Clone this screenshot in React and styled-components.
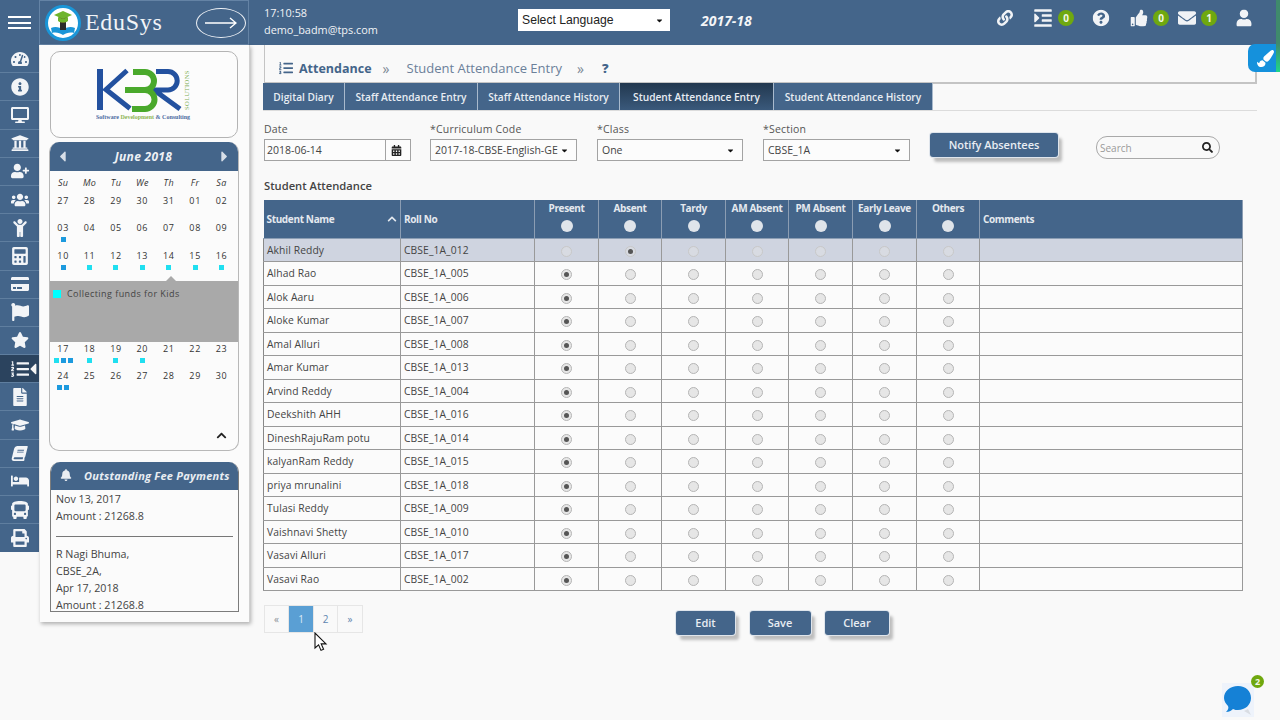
import React from "react";
import styled, { createGlobalStyle } from "styled-components";
import {
  FaTachometerAlt, FaInfoCircle, FaDesktop, FaUniversity, FaUserPlus, FaUsers, FaChild, FaCalculator,
  FaCreditCard, FaFlag, FaStar, FaListOl, FaFileAlt, FaGraduationCap, FaBook, FaBed, FaBus, FaPrint,
  FaLink, FaIndent, FaQuestionCircle, FaThumbsUp, FaEnvelope, FaUser, FaBell, FaCalendarAlt, FaSearch,
  FaPaintBrush, FaChevronUp, FaCaretLeft, FaCaretRight, FaCaretDown,
} from "react-icons/fa";

const NAVY = "#44658a";
const UI = `"Open Sans", "Liberation Sans", sans-serif`;

const Global = createGlobalStyle`
  html, body { margin: 0; padding: 0; background: #f9f9f9; }
  body { font-family: ${UI}; color: #444; }
  * { box-sizing: border-box; }
`;

const Page = styled.div`
  position: relative; width: 1280px; height: 720px; overflow: hidden; background: #f9f9f9;
`;

/* ---------- top bar ---------- */
const TopBar = styled.header`
  display: flex; align-items: stretch; height: 45px; background: ${NAVY}; color: #fff;
`;
const Burger = styled.div`
  width: 39px; display: flex; flex-direction: column; justify-content: center; align-items: center; gap: 3.5px;
  span { display: block; width: 23px; height: 2px; background: #fff; }
`;
const Brand = styled.div`
  width: 210px; display: flex; align-items: center; padding-left: 5px;
  border: 1px solid #6483a5;
`;
const BrandName = styled.span`
  font-family: "Liberation Serif", "DejaVu Serif", serif; font-size: 24px; letter-spacing: 0.7px;
  margin-left: 4px; color: #f2f4f7; width: 112px;
`;
const ArrowOval = styled.div`
  width: 50px; height: 30px; border: 1px solid #eef1f5; border-radius: 50%;
  display: flex; align-items: center; justify-content: center; margin-left: -1px;
`;
const Who = styled.div`
  width: 269px; padding: 4px 0 0 15px; font-size: 10.9px; line-height: 17px; color: #f2f4f7;
`;
const LangSelect = styled.div`
  width: 152px; height: 22px; margin-top: 9px; background: #fff; color: #222; padding: 0 3px 0 4px;
  font-family: "Liberation Sans", sans-serif; font-size: 12.2px;
  display: flex; align-items: center; justify-content: space-between;
`;
const Year = styled.div`
  margin: 12px 0 0 31px; width: 259px; font-size: 14px; font-weight: 700; font-style: italic; color: #f4f6f8; line-height: 18px;
`;
const TopIcons = styled.div`
  position: relative; flex: 1;
`;
const TopIcon = styled.div`
  position: absolute; top: 18px; left: ${p => p.$x}px; transform: translate(-50%, -50%);
  display: flex; color: #f1f3f6; font-size: ${p => p.$s || 17}px;
`;
const Badge = styled.div`
  position: absolute; width: 16px; height: 16px; border-radius: 50%; background: #6fa80f; color: #f2f7e6;
  font-size: 10px; font-weight: 700; line-height: 16px; text-align: center;
  left: ${p => p.$x}px; top: ${p => p.$y}px;
`;

/* ---------- body ---------- */
const Body = styled.div`
  display: flex; align-items: flex-start;
`;
const Rail = styled.nav`
  width: 39px; background: ${NAVY}; display: flex; flex-direction: column;
`;
const RailItem = styled.div`
  position: relative; height: 28.2px; display: flex; align-items: center; justify-content: center;
  color: #f2f4f7; font-size: 18px; border-bottom: 1px solid #5f7e9f;
  background: ${p => (p.$active ? "#2b435e" : "transparent")};
  &:last-child { border-bottom: 0; }
`;
const RailCaret = styled.span`
  position: absolute; right: -3px; top: 5px; display: flex; color: #f4f4f4; font-size: 18px;
`;
const SlantBook = styled(FaBook)`
  font-size: 15px; transform: skewX(-14deg);
`;
const Side = styled.aside`
  width: 210px; height: 577px; padding: 6px 9px 0 9px; background: #fbfbfb; border-right: 1px solid #d0d0d0;
  box-shadow: 1px 2px 4px rgba(0,0,0,.3); margin-left: 1px;
`;
const LogoCard = styled.div`
  width: 188px; height: 87px; border: 1px solid #b4b4b4; border-radius: 10px; background: #fcfcfc;
  display: flex; align-items: center; justify-content: center;
  margin-left: 1px; padding: 3px 0 0 3px;
`;
const Cal = styled.section`
  width: 190px; height: 309px; margin-top: 4px; border: 1px solid #b8b8b8; border-top: 0; border-radius: 10px; background: #fbfbfb; overflow: hidden;
`;
const CalHead = styled.div`
  height: 29px; background: ${NAVY}; color: #eef1f5; display: flex; align-items: center; justify-content: space-between;
  padding: 0 5px 0 4px; font-size: 12px; font-weight: 700; font-style: italic; letter-spacing: .3px;
  svg { font-size: 17px; color: #d8dfe8; }
`;
const CalGrid = styled.div`
  display: grid; grid-template-columns: repeat(7, 26.4px); margin: ${p => p.$m || 0};
`;
const WeekCell = styled.div`
  text-align: center; font-size: 9px; font-style: italic; color: #333; letter-spacing: .4px; line-height: 12px; padding-top: 6px; height: 21px;
`;
const DayCell = styled.div`
  height: 27.3px; text-align: center; font-size: 9px; letter-spacing: .7px; color: #333; line-height: 12px; padding-top: 3px;
`;
const Dots = styled.div`
  display: flex; justify-content: center; gap: 2px; margin-top: 3px;
`;
const Dot = styled.i`
  display: block; width: 5px; height: 5px; background: ${p => (p.$blue ? "#1c9ade" : "#20dff0")};
`;
const EventPanel = styled.div`
  position: relative; height: 61px; background: #a9a9a9; display: flex; align-items: flex-start; padding: 9px 0 0 3px;
  font-size: 9px; letter-spacing: .45px; color: #444;
  &::before { content: ""; position: absolute; left: 116px; top: -5px; border: 5px solid transparent; border-top: 0; border-bottom-color: #a9a9a9; }
`;
const EventSwatch = styled.i`
  width: 8px; height: 8px; background: #0ff; margin-right: 6px; flex: none;
`;
const EventText = styled.span` line-height: 10px; margin-top: -1px; `;
const CalFoot = styled.div`
  display: flex; justify-content: flex-end; padding: 36px 11px 0 0; font-size: 11px; color: #222;
`;
const FeeCard = styled.section`
  width: 189px; height: 150px; margin: 11px 0 0 1px; border: 1px solid #7c7c7c; border-top: 0; border-radius: 10px 10px 0 0; overflow: hidden; background: #fbfbfb;
`;
const FeeHead = styled.div`
  height: 28px; background: ${NAVY}; color: #e9edf2; display: flex; align-items: center; padding: 0 0 2px 9px;
  font-size: 11px; font-weight: 700; font-style: italic; letter-spacing: .25px; white-space: nowrap;
  svg { font-size: 12px; margin-right: 12px; flex: none; }
`;
const FeeBody = styled.div`
  padding: 1px 5px 0; font-size: 10.7px; line-height: 17px; color: #444;
  p { margin: 0; }
`;
const FeeRule = styled.hr`
  margin: 11px 0 9px; border: 0; border-top: 1px solid #777;
`;

/* ---------- main ---------- */
const Main = styled.main`
  width: 993px; margin-left: 14px; position: relative;
`;
const Crumb = styled.div`
  height: 39px; border: 1px solid #c4c4c4; border-width: 0 2px 2px 1px; display: flex; align-items: center;
  padding: 9px 0 0 14px; color: #6b8099; font-size: 13px;
`;
const CrumbStrong = styled.span`
  color: ${NAVY}; font-weight: 700; font-size: 12.5px; margin-left: 6px;
`;
const CrumbSep = styled.span`
  color: #7b8794; font-size: 14px; margin: 0 ${p => p.$r}px 0 ${p => p.$l}px;
`;
const Help = styled.span`
  color: ${NAVY}; font-weight: 800; font-size: 13px;
`;
const Tabs = styled.div`
  display: flex; margin: -1px 0 0 -1px; height: 28px; border-bottom: 1px solid #dcdcdc;
`;
const Tab = styled.div`
  width: ${p => p.$w}px; height: 27px; display: flex; align-items: center; justify-content: center; font-size: 10.2px; font-weight: 600; white-space: nowrap;
  color: #e8edf3; border-right: 1px solid #a9bacd;
  background: ${p => (p.$active ? "linear-gradient(#22384f,#3a597b)" : NAVY)};
`;
const FormRow = styled.div`
  display: flex; align-items: flex-start; margin-top: 11px; height: 42px;
`;
const Field = styled.div`
  width: ${p => p.$w}px; margin-right: ${p => p.$gap}px; font-size: 10.5px; color: #555;
`;
const FieldLabel = styled.div` height: 17px; line-height: 14px; letter-spacing: .2px; `;
const InputBox = styled.div`
  height: 22px; border: 1px solid #a3a3a3; background: #fcfcfc; display: flex; align-items: center; justify-content: space-between;
  padding: 0 4px 0 ${p => (p.$tight ? 2 : 4)}px; color: #444; font-size: 10.5px;
`;
const CalBtn = styled.div`
  width: 25px; height: 20px; margin-right: -4px; border-left: 1px solid #a3a3a3; display: flex; align-items: center; justify-content: center; color: #222; font-size: 11px; padding-right: 3px;
`;
const Caret = styled.span` display: flex; font-size: 9px; color: #111; margin-right: 3px; `;
const RaisedBtn = styled.button`
  height: 24px; padding: 0 0 2px; width: ${p => p.$w}px; border: 0; border-radius: 3px; background: ${NAVY}; color: #e8edf3;
  margin-top: ${p => p.$top || 0}px;
  font-family: ${UI}; font-size: 11px; font-weight: 600;
  box-shadow: 0 0 0 1px #dfe5ec, 4px 5px 3px #bdbdbd;
`;
const SearchBox = styled.div`
  width: 124px; height: 23px; margin: 14px 0 0 38px; border: 1px solid #a9a9a9; border-radius: 11px; display: flex; align-items: center; justify-content: space-between;
  padding: 0 6px 0 3px; font-size: 10px; color: #9a9a9a;
  svg { color: #222; font-size: 11px; }
`;
const SectionTitle = styled.div`
  margin-top: 12px; height: 20px; font-size: 11.2px; font-weight: 600; color: #444; line-height: 20px;
`;
const Grid = styled.table`
  width: 979px; border-collapse: collapse; table-layout: fixed; margin: 4px 0 0 -1px; border-bottom: 1px solid #888;
`;
const Th = styled.th`
  height: 38px; padding: 0 ${p => (p.$left ? "3px" : "0")}; background: ${NAVY}; color: #e4e9ef; font-size: 10px; font-weight: 700; letter-spacing: -.35px;
  border-right: 1px solid #8b9db3; border-bottom: 1px solid #8b9db3; text-align: ${p => (p.$left ? "left" : "center")}; vertical-align: middle; white-space: nowrap;
`;
const ThInner = styled.div`
  display: flex; flex-direction: column; align-items: center; gap: 5px; line-height: 13px; padding-bottom: 4px;
`;
const NameHead = styled.div`
  display: flex; align-items: center; justify-content: space-between;
  svg { font-size: 10px; }
`;
const HeadRadio = styled.i`
  display: block; width: 12px; height: 12px; border-radius: 50%; background: #dfe4ea;
`;
const Tr = styled.tr`
  background: ${p => (p.$sel ? "#cfd4e0" : "#fbfbfb")};
`;
const Td = styled.td`
  height: 23.53px; padding: 0 3px; font-size: 10.3px; color: #444; border: 1px solid #999; border-top: 0; letter-spacing: .1px; white-space: nowrap;
  text-align: ${p => (p.$c ? "center" : "left")};
  &:first-child { border-left: 1px solid #888; }
`;
const Radio = styled.span`
  display: inline-block; vertical-align: middle; width: 11px; height: 11px; border-radius: 50%; position: relative;
  border: 1px solid ${p => (p.$faint ? "#c8c8c8" : "#b5b5b5")}; background: ${p => (p.$faint ? "#d8dbe2" : "#e6e6e6")};
  &::after { content: ""; position: absolute; display: ${p => (p.$on ? "block" : "none")}; left: 2px; top: 2px; width: 5px; height: 5px; border-radius: 50%; background: #555; }
`;
const Footer = styled.div`
  display: flex; align-items: flex-start; margin-top: 14px;
`;
const Pager = styled.div`
  display: flex; height: 28px; width: 412px;
`;
const PageCell = styled.div`
  width: ${p => p.$w}px; height: 28px; display: flex; align-items: center; justify-content: center; font-size: 10px;
  border: 1px solid #e6e6e6; margin-right: -1px;
  color: ${p => (p.$active ? "#dfeaf5" : p.$dim ? "#8a8f96" : "#5f86b0")};
  background: ${p => (p.$active ? "#5a9fd4" : "transparent")};
`;
const Actions = styled.div`
  display: flex; gap: 14.5px; margin-top: 6px;
`;

/* ---------- overlays ---------- */
const GreenEdge = styled.div`
  position: absolute; right: 0; top: 0; width: 4px; height: 72px; background: linear-gradient(#3f8a6c 60%, #1fd68a);
`;
const BrushTab = styled.div`
  position: absolute; left: 1248px; top: 44px; width: 28px; height: 28px; background: #1591dc; border-radius: 7px 0 0 7px;
  display: flex; align-items: center; justify-content: center; color: #fff; font-size: 17px; padding-left: 6px;
`;
const Chat = styled.div` position: absolute; left: 1222px; top: 683px; width: 32px; height: 34px; background: #eef3fb; `;
const ChatBadge = styled(Badge)` left: 1251px; top: 675px; width: 13px; height: 13px; line-height: 13px; font-size: 9px; `;
const Cursor = styled.svg` position: absolute; left: 314px; top: 632px; `;

const railIcons = [FaTachometerAlt, FaInfoCircle, FaDesktop, FaUniversity, FaUserPlus, FaUsers, FaChild, FaCalculator, FaCreditCard, FaFlag, FaStar, FaListOl, FaFileAlt, FaGraduationCap, SlantBook, FaBed, FaBus, FaPrint];
const week = ["Su", "Mo", "Tu", "We", "Th", "Fr", "Sa"];
const C = "c", B = "b";
const calRows = [
  [["27"], ["28"], ["29"], ["30"], ["31"], ["01"], ["02"]],
  [["03", [B]], ["04"], ["05"], ["06"], ["07"], ["08"], ["09"]],
  [["10", [B]], ["11", [C]], ["12", [C]], ["13", [C]], ["14", [C]], ["15", [C]], ["16", [C]]],
];
const calRows2 = [
  [["17", [C, B, B]], ["18", [C]], ["19", [C]], ["20", [C]], ["21"], ["22"], ["23"]],
  [["24", [B, B]], ["25"], ["26"], ["27"], ["28"], ["29"], ["30"]],
];
const students = [
  ["Akhil Reddy", "CBSE_1A_012"], ["Alhad Rao", "CBSE_1A_005"], ["Alok Aaru", "CBSE_1A_006"], ["Aloke Kumar", "CBSE_1A_007"],
  ["Amal Alluri", "CBSE_1A_008"], ["Amar Kumar", "CBSE_1A_013"], ["Arvind Reddy", "CBSE_1A_004"], ["Deekshith AHH", "CBSE_1A_016"],
  ["DineshRajuRam potu", "CBSE_1A_014"], ["kalyanRam Reddy", "CBSE_1A_015"], ["priya mrunalini", "CBSE_1A_018"], ["Tulasi Reddy", "CBSE_1A_009"],
  ["Vaishnavi Shetty", "CBSE_1A_010"], ["Vasavi Alluri", "CBSE_1A_017"], ["Vasavi Rao", "CBSE_1A_002"],
];
const statuses = ["Present", "Absent", "Tardy", "AM Absent", "PM Absent", "Early Leave", "Others"];
const widths = [137, 134, 64, 63, 64, 63, 64, 64, 63, 263];
const tabs = [["Digital Diary", 82], ["Staff Attendance Entry", 133], ["Staff Attendance History", 142], ["Student Attendance Entry", 154], ["Student Attendance History", 159]];

const EduLogo = () => (
  <svg width="36" height="36" viewBox="0 0 36 36">
    <circle cx="18" cy="18" r="16.5" fill="#fff" stroke="#1a96d8" strokeWidth="3" />
    <path d="M6 23c4-2 9-1 12 2 3-3 8-4 12-2l-1 5c-4-1-8 0-11 2-3-2-7-3-11-2z" fill="#1a96d8" />
    <path d="M15 17h6v8h-6z" fill="#2b2b2b" />
    <circle cx="18" cy="14" r="4" fill="#5a3a20" />
    <path d="M9 10l9-4 9 4-9 4z" fill="#6fb52c" />
    <path d="M13 12v4c3 2 7 2 10 0v-4l-5 2z" fill="#6fb52c" />
  </svg>
);

const KbrLogo = () => (
  <svg width="100" height="56" viewBox="0 0 100 56">
    <rect x="1" y="1" width="6" height="41" fill="#23519f" />
    <path d="M31 2.5L10 21.5 34 40.5" fill="none" stroke="#23519f" strokeWidth="5" />
    <path d="M60 3.5H72a9.2 9.2 0 0 1 0 18.4H58L84 41" fill="none" stroke="#23519f" strokeWidth="5" />
    <path d="M37 4H49a9 9 0 0 1 0 18H29M49 22a9.5 9.5 0 0 1 0 19H36" fill="none" stroke="#4aa92c" strokeWidth="6" />
    <text x="0" y="0" transform="translate(93 42) rotate(-90)" fontFamily="Liberation Serif, serif" fontSize="6.6" letterSpacing=".35" fill="#7fae55">SOLUTIONS</text>
    <text x="0" y="50.5" fontFamily="Liberation Serif, serif" fontWeight="700" fontSize="6" fill="#4a6aa0">Software <tspan fill="#8db554">Development</tspan> &amp; Consulting</text>
  </svg>
);

export default function App() {
  return (
    <Page>
      <Global />
      <TopBar>
        <Burger><span /><span /><span /></Burger>
        <Brand>
          <EduLogo />
          <BrandName>EduSys</BrandName>
          <ArrowOval>
            <svg width="32" height="12" viewBox="0 0 32 12"><path d="M0 6H31M25 1l6 5-6 5" fill="none" stroke="#fff" strokeWidth="1.4" /></svg>
          </ArrowOval>
        </Brand>
        <Who>17:10:58<br />demo_badm@tps.com</Who>
        <LangSelect>Select Language <Caret><FaCaretDown /></Caret></LangSelect>
        <Year>2017-18</Year>
        <TopIcons>
          <TopIcon $x={45} $s={16}><FaLink /></TopIcon>
          <TopIcon $x={83} $s={20}><FaIndent /></TopIcon>
          <Badge $x={98} $y={10}>0</Badge>
          <TopIcon $x={141}><FaQuestionCircle /></TopIcon>
          <TopIcon $x={179}><FaThumbsUp /></TopIcon>
          <Badge $x={193} $y={10}>0</Badge>
          <TopIcon $x={227} $s={18}><FaEnvelope /></TopIcon>
          <Badge $x={241} $y={10}>1</Badge>
          <TopIcon $x={284} $s={17}><FaUser /></TopIcon>
        </TopIcons>
      </TopBar>
      <Body>
        <Rail>
          {railIcons.map((I, i) => (
            <RailItem key={i} $active={i === 11}>
              <I />
              {i === 11 && <RailCaret><FaCaretLeft /></RailCaret>}
            </RailItem>
          ))}
        </Rail>
        <Side>
          <LogoCard><KbrLogo /></LogoCard>
          <Cal>
            <CalHead><FaCaretLeft /><span>June 2018</span><FaCaretRight /></CalHead>
            <CalGrid $m="0 0 7px 0">
              {week.map(d => <WeekCell key={d}>{d}</WeekCell>)}
              {calRows.flat().map(([d, dots], i) => (
                <DayCell key={i}>{d}{dots && <Dots>{dots.map((k, j) => <Dot key={j} $blue={k === B} />)}</Dots>}</DayCell>
              ))}
            </CalGrid>
            <EventPanel><EventSwatch /><EventText>Collecting funds for Kids</EventText></EventPanel>
            <CalGrid $m="-2px 0 0 0">
              {calRows2.flat().map(([d, dots], i) => (
                <DayCell key={i}>{d}{dots && <Dots>{dots.map((k, j) => <Dot key={j} $blue={k === B} />)}</Dots>}</DayCell>
              ))}
            </CalGrid>
            <CalFoot><FaChevronUp /></CalFoot>
          </Cal>
          <FeeCard>
            <FeeHead><FaBell />Outstanding Fee Payments</FeeHead>
            <FeeBody>
              <p>Nov 13, 2017</p>
              <p>Amount : 21268.8</p>
              <FeeRule />
              <p>R Nagi Bhuma,</p>
              <p>CBSE_2A,</p>
              <p>Apr 17, 2018</p>
              <p>Amount : 21268.8</p>
            </FeeBody>
          </FeeCard>
        </Side>
        <Main>
          <Crumb>
            <FaListOl color={NAVY} size={14} />
            <CrumbStrong>Attendance</CrumbStrong>
            <CrumbSep $l={11} $r={17}>»</CrumbSep>
            Student Attendance Entry
            <CrumbSep $l={15} $r={18}>»</CrumbSep>
            <Help>?</Help>
          </Crumb>
          <Tabs>
            {tabs.map(([t, w], i) => <Tab key={t} $w={w} $active={i === 3}>{t}</Tab>)}
          </Tabs>
          <FormRow>
            <Field $w={147} $gap={19}>
              <FieldLabel>Date</FieldLabel>
              <InputBox $tight>2018-06-14<CalBtn><FaCalendarAlt /></CalBtn></InputBox>
            </Field>
            <Field $w={147} $gap={20}>
              <FieldLabel>*Curriculum Code</FieldLabel>
              <InputBox>2017-18-CBSE-English-GE<Caret><FaCaretDown /></Caret></InputBox>
            </Field>
            <Field $w={146} $gap={20}>
              <FieldLabel>*Class</FieldLabel>
              <InputBox>One<Caret><FaCaretDown /></Caret></InputBox>
            </Field>
            <Field $w={147} $gap={20}>
              <FieldLabel>*Section</FieldLabel>
              <InputBox>CBSE_1A<Caret><FaCaretDown /></Caret></InputBox>
            </Field>
            <RaisedBtn $w={128} $top={11}>Notify Absentees</RaisedBtn>
            <SearchBox>Search<FaSearch /></SearchBox>
          </FormRow>
          <SectionTitle>Student Attendance</SectionTitle>
          <Grid>
            <colgroup>{widths.map((w, i) => <col key={i} width={w} />)}</colgroup>
            <thead>
              <tr>
                <Th $left><NameHead>Student Name <FaChevronUp /></NameHead></Th>
                <Th $left>Roll No</Th>
                {statuses.map(s => <Th key={s}><ThInner>{s}<HeadRadio /></ThInner></Th>)}
                <Th $left>Comments</Th>
              </tr>
            </thead>
            <tbody>
              {students.map(([n, r], i) => (
                <Tr key={r} $sel={i === 0}>
                  <Td>{n}</Td>
                  <Td>{r}</Td>
                  {statuses.map((s, j) => (
                    <Td key={s} $c><Radio $on={i === 0 ? j === 1 : j === 0} $faint={i === 0} /></Td>
                  ))}
                  <Td />
                </Tr>
              ))}
            </tbody>
          </Grid>
          <Footer>
            <Pager>
              <PageCell $w={25} $dim>«</PageCell>
              <PageCell $w={26} $active>1</PageCell>
              <PageCell $w={25}>2</PageCell>
              <PageCell $w={26}>»</PageCell>
            </Pager>
            <Actions>
              <RaisedBtn $w={59}>Edit</RaisedBtn>
              <RaisedBtn $w={61}>Save</RaisedBtn>
              <RaisedBtn $w={64}>Clear</RaisedBtn>
            </Actions>
          </Footer>
        </Main>
      </Body>
      <GreenEdge />
      <BrushTab><FaPaintBrush /></BrushTab>
      <Chat>
        <svg width="32" height="34" viewBox="0 0 32 34">
          <path d="M22 28l7 4-3-6z" fill="#d9dde3" />
          <path d="M16 3c8 0 13 5 13 12s-6 12-13 12c-2 0-3 0-5-1-2 2-4 3-7 3 2-2 3-4 2-6-2-2-4-5-4-8C2 8 8 3 16 3z" fill="#1581d6" />
        </svg>
      </Chat>
      <ChatBadge>2</ChatBadge>
      <Cursor width="14" height="20" viewBox="0 0 14 20">
        <path d="M1 1v15l3.6-3.2 2.4 5.6 2.6-1.1-2.4-5.4H12z" fill="#fff" stroke="#111" strokeWidth="1.1" />
      </Cursor>
    </Page>
  );
}
